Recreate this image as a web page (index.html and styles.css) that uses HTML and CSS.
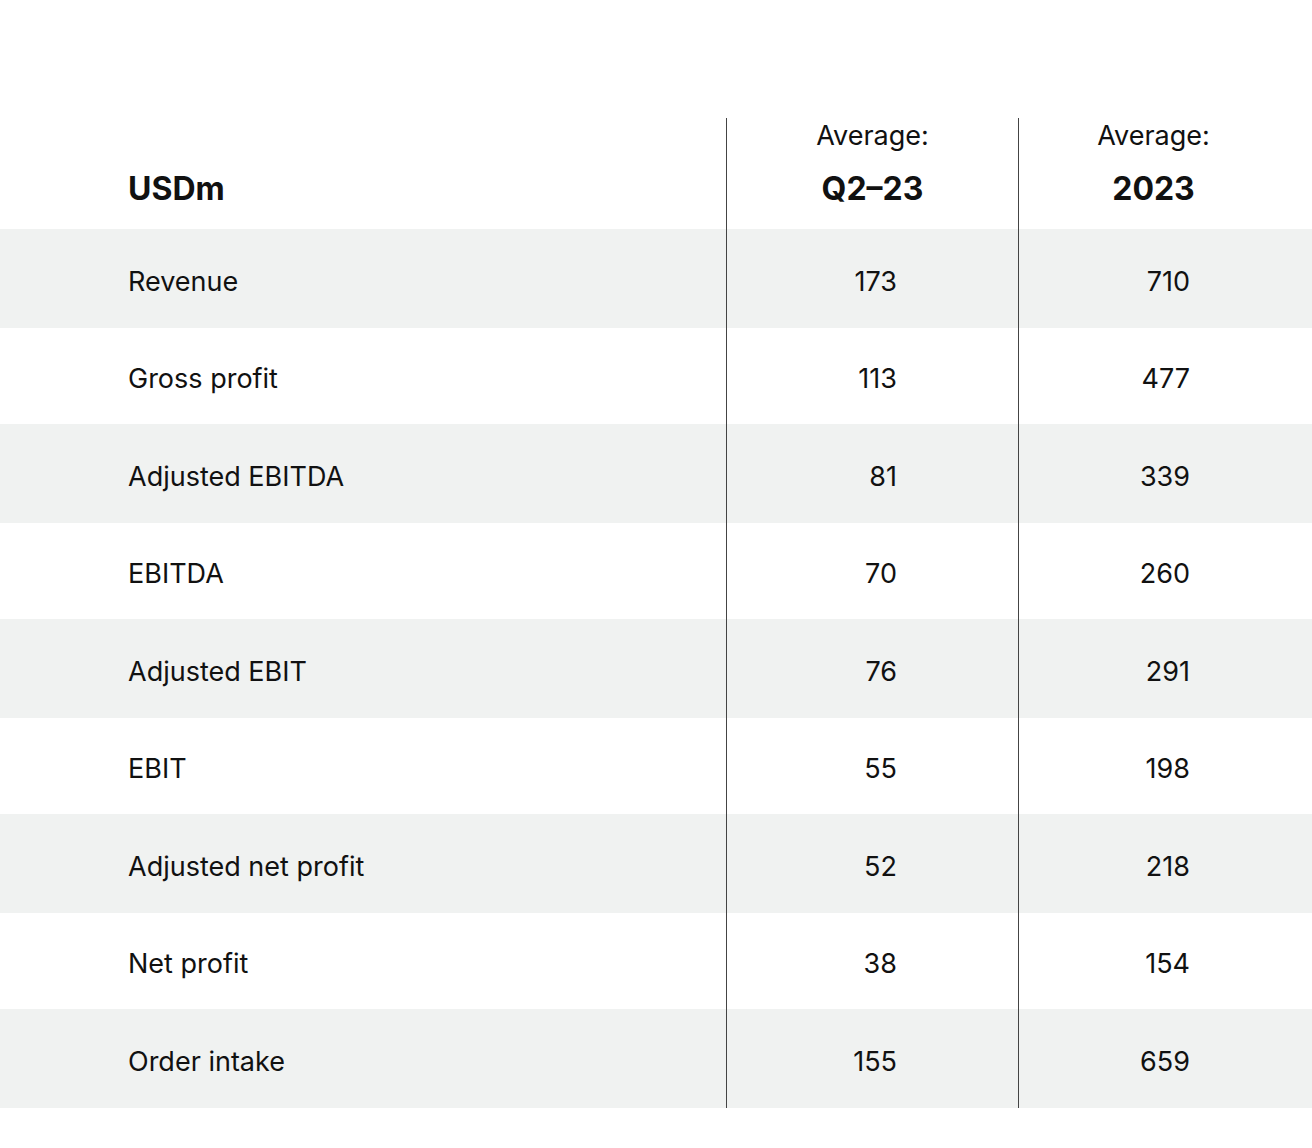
FILE: index.html
```html
<!DOCTYPE html>
<html lang="en">
<head>
<meta charset="utf-8">
<title>USDm averages</title>
<link rel="stylesheet" href="styles.css">
</head>
<body>
<div class="table">
  <div class="row head">
    <div class="cell label"><span class="bold">USDm</span></div>
    <div class="cell col c1"><span class="sub">Average:</span><span class="bold">Q2–23</span></div>
    <div class="cell col c2"><span class="sub">Average:</span><span class="bold">2023</span></div>
  </div>
  <div class="row gray"><div class="cell label">Revenue</div><div class="cell num">173</div><div class="cell num n2">710</div></div>
  <div class="row white"><div class="cell label">Gross profit</div><div class="cell num">113</div><div class="cell num n2">477</div></div>
  <div class="row gray"><div class="cell label">Adjusted EBITDA</div><div class="cell num">81</div><div class="cell num n2">339</div></div>
  <div class="row white"><div class="cell label">EBITDA</div><div class="cell num">70</div><div class="cell num n2">260</div></div>
  <div class="row gray"><div class="cell label">Adjusted EBIT</div><div class="cell num">76</div><div class="cell num n2">291</div></div>
  <div class="row white"><div class="cell label">EBIT</div><div class="cell num">55</div><div class="cell num n2">198</div></div>
  <div class="row gray"><div class="cell label">Adjusted net profit</div><div class="cell num">52</div><div class="cell num n2">218</div></div>
  <div class="row white"><div class="cell label">Net profit</div><div class="cell num">38</div><div class="cell num n2">154</div></div>
  <div class="row gray"><div class="cell label">Order intake</div><div class="cell num">155</div><div class="cell num n2">659</div></div>
</div>
</body>
</html>
```
FILE: styles.css
```css
html, body {
  margin: 0;
  padding: 0;
  background: #ffffff;
}
body {
  font-family: "Inter", "Liberation Sans", sans-serif;
  color: #111111;
  width: 1312px;
  height: 1148px;
  overflow: hidden;
}
.table {
  padding-top: 118px;
}
.row {
  display: grid;
  grid-template-columns: 726px 292px 294px;
}
.gray { background: #f0f2f1; height: 99px; }
.white { background: #ffffff; height: 96px; }
.head { height: 111px; }
.cell {
  font-size: 27px;
  line-height: 27px;
  display: flex;
  align-items: center;
  padding-top: 5px;
  box-sizing: border-box;
}
.label {
  padding-left: 128px;
}
.num, .col {
  border-left: 1px solid #444444;
}
.num {
  justify-content: flex-end;
  padding-right: 121px;
}
.num.n2 {
  padding-right: 122px;
}
.head .cell {
  padding-top: 0;
  align-items: flex-end;
  padding-bottom: 24px;
}
.head .col {
  flex-direction: column;
  justify-content: flex-end;
  align-items: center;
}
.head .c2 {
  padding-right: 24px;
}
.sub {
  display: block;
  font-size: 27px;
  line-height: 27px;
  margin-bottom: 24px;
}
.bold {
  display: block;
  font-size: 32px;
  line-height: 32px;
  font-weight: 700;
}
```
